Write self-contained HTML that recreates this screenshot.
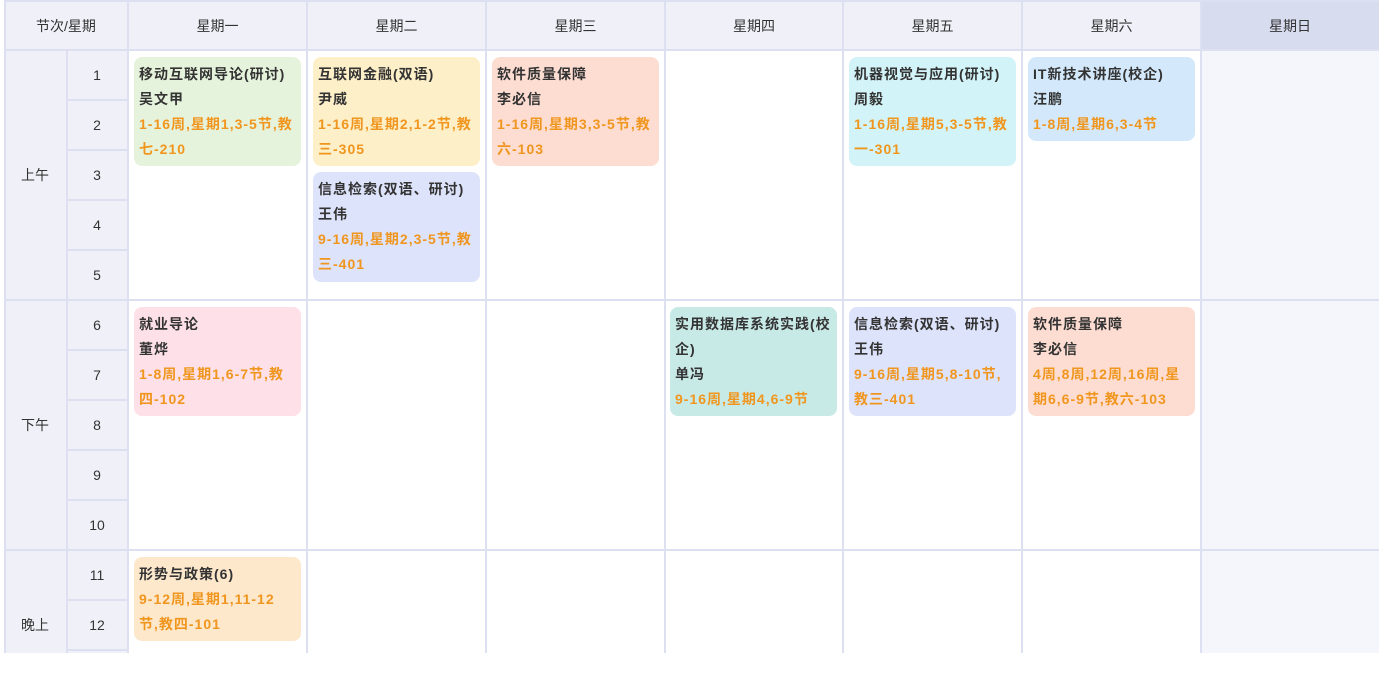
<!DOCTYPE html>
<html><head><meta charset="utf-8"><style>
body{margin:0;width:1379px;height:653px;overflow:hidden;background:#fff;font-family:"Liberation Sans","Noto Sans CJK SC",sans-serif;position:relative}
div{position:absolute;box-sizing:border-box}
.h{top:2px;height:48px;background:#eff0f8;color:#333;font-size:14px;line-height:48px;text-align:center}
.v{background:#dde0f0;width:2px}
.hl{background:#dde0f0;height:2px}
.n{left:66px;width:62px;height:50px;line-height:50px;text-align:center;font-size:14px;color:#333}
.s{left:4px;width:62px;text-align:center;font-size:14px;color:#333}
.c{width:167px;border-radius:8px;padding:5px 5px 4px;font-size:14px;font-weight:bold;line-height:25px;color:#333;white-space:nowrap;letter-spacing:1px}
.c i{font-style:normal;color:#f0961e}
</style></head><body>
<div style="left:4px;top:50px;width:124px;height:603px;background:#f0f1f8"></div>
<div style="left:1201px;top:50px;width:178px;height:603px;background:#f4f6fb"></div>
<div class="h" style="left:4px;width:124px">节次/星期</div>
<div class="h" style="left:128px;width:179px">星期一</div>
<div class="h" style="left:307px;width:179px">星期二</div>
<div class="h" style="left:486px;width:179px">星期三</div>
<div class="h" style="left:665px;width:178px">星期四</div>
<div class="h" style="left:843px;width:179px">星期五</div>
<div class="h" style="left:1022px;width:179px">星期六</div>
<div class="h" style="left:1201px;width:178px;background:#d8dcef">星期日</div>
<div class="hl" style="left:4px;top:0;width:1375px"></div>
<div class="hl" style="left:4px;top:49px;width:1375px"></div>
<div class="hl" style="left:4px;top:299px;width:1375px"></div>
<div class="hl" style="left:4px;top:549px;width:1375px"></div>
<div class="hl" style="left:66px;top:99px;width:62px"></div>
<div class="hl" style="left:66px;top:149px;width:62px"></div>
<div class="hl" style="left:66px;top:199px;width:62px"></div>
<div class="hl" style="left:66px;top:249px;width:62px"></div>
<div class="hl" style="left:66px;top:349px;width:62px"></div>
<div class="hl" style="left:66px;top:399px;width:62px"></div>
<div class="hl" style="left:66px;top:449px;width:62px"></div>
<div class="hl" style="left:66px;top:499px;width:62px"></div>
<div class="hl" style="left:66px;top:599px;width:62px"></div>
<div class="hl" style="left:66px;top:649px;width:62px"></div>
<div class="v" style="left:4px;top:0;height:653px"></div>
<div class="v" style="left:66px;top:50px;height:603px"></div>
<div class="v" style="left:127px;top:0;height:653px"></div>
<div class="v" style="left:306px;top:0;height:653px"></div>
<div class="v" style="left:485px;top:0;height:653px"></div>
<div class="v" style="left:664px;top:0;height:653px"></div>
<div class="v" style="left:842px;top:0;height:653px"></div>
<div class="v" style="left:1021px;top:0;height:653px"></div>
<div class="v" style="left:1200px;top:0;height:653px"></div>
<div class="s" style="top:50px;height:250px;line-height:250px">上午</div>
<div class="s" style="top:300px;height:250px;line-height:250px">下午</div>
<div class="s" style="top:550px;height:150px;line-height:150px">晚上</div>
<div class="n" style="top:50px">1</div><div class="n" style="top:100px">2</div><div class="n" style="top:150px">3</div><div class="n" style="top:200px">4</div><div class="n" style="top:250px">5</div>
<div class="n" style="top:300px">6</div><div class="n" style="top:350px">7</div><div class="n" style="top:400px">8</div><div class="n" style="top:450px">9</div><div class="n" style="top:500px">10</div>
<div class="n" style="top:550px">11</div><div class="n" style="top:600px">12</div>

<div class="c" style="left:134px;top:57px;height:109px;background:#e6f3dc">移动互联网导论(研讨)<br>吴文甲<br><i>1-16周,星期1,3-5节,教<br>七-210</i></div>
<div class="c" style="left:313px;top:57px;height:109px;background:#fdefc8">互联网金融(双语)<br>尹威<br><i>1-16周,星期2,1-2节,教<br>三-305</i></div>
<div class="c" style="left:313px;top:172px;height:110px;background:#dde3fa">信息检索(双语、研讨)<br>王伟<br><i>9-16周,星期2,3-5节,教<br>三-401</i></div>
<div class="c" style="left:492px;top:57px;height:109px;background:#fdddd2">软件质量保障<br>李必信<br><i>1-16周,星期3,3-5节,教<br>六-103</i></div>
<div class="c" style="left:849px;top:57px;height:109px;background:#d2f3f7">机器视觉与应用(研讨)<br>周毅<br><i>1-16周,星期5,3-5节,教<br>一-301</i></div>
<div class="c" style="left:1028px;top:57px;height:84px;background:#d3e9fb">IT新技术讲座(校企)<br>汪鹏<br><i>1-8周,星期6,3-4节</i></div>
<div class="c" style="left:134px;top:307px;height:109px;background:#fde0e8">就业导论<br>董烨<br><i>1-8周,星期1,6-7节,教<br>四-102</i></div>
<div class="c" style="left:670px;top:307px;height:109px;background:#c8eae7">实用数据库系统实践(校<br>企)<br>单冯<br><i>9-16周,星期4,6-9节</i></div>
<div class="c" style="left:849px;top:307px;height:109px;background:#dde3fa">信息检索(双语、研讨)<br>王伟<br><i>9-16周,星期5,8-10节,<br>教三-401</i></div>
<div class="c" style="left:1028px;top:307px;height:109px;background:#fdddd2">软件质量保障<br>李必信<br><i>4周,8周,12周,16周,星<br>期6,6-9节,教六-103</i></div>
<div class="c" style="left:134px;top:557px;height:84px;background:#fde8cc">形势与政策(6)<br><i>9-12周,星期1,11-12<br>节,教四-101</i></div>
</body></html>
